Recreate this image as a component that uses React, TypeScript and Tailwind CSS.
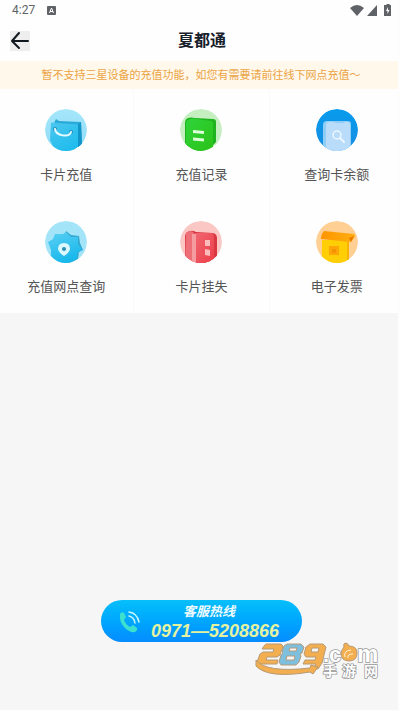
import type { ReactNode } from "react";

function BagIcon() {
  return (
    <svg viewBox="0 0 42 42" className="size-[42px]" aria-hidden="true">
      <defs>
        <clipPath id="bagClip"><circle cx="21" cy="21" r="21" /></clipPath>
        <linearGradient id="bagBg" x1="0" y1="0" x2="0" y2="1"><stop stopColor="#a5e6fa" /><stop offset="1" stopColor="#8fdcf7" /></linearGradient>
        <linearGradient id="bagFront" x1="0" y1="0" x2="0.6" y2="1"><stop stopColor="#4cc6ee" /><stop offset="1" stopColor="#20bdee" /></linearGradient>
      </defs>
      <g clipPath="url(#bagClip)">
        <circle cx="21" cy="21" r="21" fill="url(#bagBg)" />
        <path d="M9 14 11 10l3 2 22 1 1 24-9 2z" fill="#2ba9d8" />
        <path d="M6 13.5 33 15.500v20L31 42H10L5 31z" fill="url(#bagFront)" />
        <path d="m33 15.500 3-2.500 1 23-4 3z" fill="#1295c8" />
        <circle cx="10" cy="20" r="2" fill="#208fbd" />
        <circle cx="26" cy="23" r="2" fill="#208fbd" />
        <path d="M10 20c1 7 14 9 16 3" fill="none" stroke="#e6fbff" strokeWidth="2" strokeLinecap="round" />
      </g>
    </svg>
  );
}

function RecordIcon() {
  return (
    <svg viewBox="0 0 42 42" className="size-[42px]" aria-hidden="true">
      <defs>
        <clipPath id="recClip"><circle cx="21" cy="21" r="21" /></clipPath>
        <linearGradient id="recFront" x1="0" y1="0" x2="1" y2="1"><stop stopColor="#2fd43a" /><stop offset="1" stopColor="#2bc219" /></linearGradient>
      </defs>
      <g clipPath="url(#recClip)">
        <circle cx="21" cy="21" r="21" fill="#c5efc0" />
        <path d="M8 9q3-1 7 0l18 1q3 0 3 3v20q-7 9-17 9-8-1-14-8V14q0-4 3-5z" fill="#1fb41f" />
        <path d="M10 10q4-1 7 0l14 2q2 0 2 3v23q-7 4-14 4-7-1-13-6V14q0-3 4-4z" fill="url(#recFront)" />
        <path d="m13 21 11 1v3l-11-1zM13 28.500l11 1v3l-11-1z" fill="#dcffd9" />
      </g>
    </svg>
  );
}

function BalanceIcon() {
  return (
    <svg viewBox="0 0 42 42" className="size-[42px]" aria-hidden="true">
      <defs>
        <clipPath id="balClip"><circle cx="21" cy="21" r="21" /></clipPath>
        <linearGradient id="balBg" x1="0" y1="0" x2="0" y2="1"><stop stopColor="#079bed" /><stop offset="1" stopColor="#178de1" /></linearGradient>
      </defs>
      <g clipPath="url(#balClip)">
        <circle cx="21" cy="21" r="21" fill="url(#balBg)" />
        <path d="M7 16q0-4 4-4h21q3 0 3 3v27H7z" fill="#8ecdf6" />
        <path d="M10 16q0-3 3-3h5l2 1h7l2-1h2q3 0 3 3v26H10z" fill="#b8dcfa" />
        <circle cx="21" cy="26" r="4" fill="none" stroke="#edf8ff" strokeWidth="1.500" />
        <path d="m24 29 4 4" stroke="#edf8ff" strokeWidth="2" strokeLinecap="round" />
      </g>
    </svg>
  );
}

function BranchIcon() {
  return (
    <svg viewBox="0 0 42 42" className="size-[42px]" aria-hidden="true">
      <defs>
        <clipPath id="braClip"><circle cx="21" cy="21" r="21" /></clipPath>
        <linearGradient id="braFront" x1="0" y1="0" x2="0.400" y2="1"><stop stopColor="#5cd0f3" /><stop offset="1" stopColor="#18b8ec" /></linearGradient>
      </defs>
      <g clipPath="url(#braClip)">
        <circle cx="21" cy="21" r="21" fill="#a3e4f8" />
        <path d="m21 10 5 4 8 1 1 7 3 7-4 2-1 7-8 4-12-3z" fill="#35a9d0" />
        <path d="m10 13 8 0 3-2 5 5 7 0 0 7 4 6-5 3v6l-9 4-10 0-7-7 0-6-3-8 5-3z" fill="url(#braFront)" />
        <path d="M19 22q6 0 6 6-1 4-6 7-5-3-6-7 0-6 6-6z" fill="#dcf8ff" />
        <circle cx="19" cy="28" r="2" fill="#298eb2" />
      </g>
    </svg>
  );
}

function LossIcon() {
  return (
    <svg viewBox="0 0 42 42" className="size-[42px]" aria-hidden="true">
      <defs>
        <clipPath id="losClip"><circle cx="21" cy="21" r="21" /></clipPath>
        <linearGradient id="losFront" x1="0" y1="0" x2="1" y2="1"><stop stopColor="#f06671" /><stop offset="1" stopColor="#ec3f49" /></linearGradient>
      </defs>
      <g clipPath="url(#losClip)">
        <circle cx="21" cy="21" r="21" fill="#fbc7c5" />
        <path d="M6 12q5-4 10-1l17 1q4 1 4 5v25H5V15z" fill="#d93742" />
        <path d="M6 12q5-4 8 0v30H5z" fill="#ee6f77" />
        <path d="M15 12h17q2 1 2 5v25H15z" fill="url(#losFront)" />
        <path d="M12 13h4v29h-4z" fill="#f59ca0" />
        <path d="M25 19h5v6h-5zM25 28l5 1v6l-5-1z" fill="#fbbcbb" />
      </g>
    </svg>
  );
}

function InvoiceIcon() {
  return (
    <svg viewBox="0 0 42 42" className="size-[42px]" aria-hidden="true">
      <defs>
        <clipPath id="invClip"><circle cx="21" cy="21" r="21" /></clipPath>
        <linearGradient id="invTop" x1="0" y1="0" x2="1" y2="0"><stop stopColor="#ff9500" /><stop offset="1" stopColor="#ffae10" /></linearGradient>
      </defs>
      <g clipPath="url(#invClip)">
        <circle cx="21" cy="21" r="21" fill="#ffcf93" />
        <path d="M6 19h27v23H6z" fill="#ffce05" />
        <path d="m31 20 2-1v20l-2 2z" fill="#f9b400" />
        <path d="m8 10 30 3q2 1 0 4l-3 4-30-3q0-5 3-8z" fill="url(#invTop)" />
        <path d="m33 17 5-2-3 6z" fill="#e97900" />
        <path d="M13 25h10v9H13z" fill="#ffa606" />
        <path d="M16 28h4v4h-4z" fill="#f49300" />
      </g>
    </svg>
  );
}

const services: { label: string; icon: ReactNode }[] = [
  { label: "卡片充值", icon: <BagIcon /> },
  { label: "充值记录", icon: <RecordIcon /> },
  { label: "查询卡余额", icon: <BalanceIcon /> },
  { label: "充值网点查询", icon: <BranchIcon /> },
  { label: "卡片挂失", icon: <LossIcon /> },
  { label: "电子发票", icon: <InvoiceIcon /> },
];

function StatusBar() {
  return (
    <div className="flex h-5 items-center justify-between pl-3 pr-1 font-[Roboto,sans-serif] text-[#5f6266]">
      <div className="flex items-center gap-3">
        <span className="text-[12px] leading-5">4:27</span>
        <svg viewBox="0 0 9 9" className="size-[9px]" aria-hidden="true">
          <rect width="9" height="9" rx="1" fill="#5f6266" />
          <path d="m2.500 7 2-5 2 5M3 5.500h3" fill="none" stroke="#fff" />
        </svg>
      </div>
      <div className="flex items-center gap-[3px]">
        <svg viewBox="0 0 14 11" className="h-[11px] w-[14px]" aria-hidden="true">
          <path d="M0 3q7-6 14 0L7 11z" fill="currentColor" />
        </svg>
        <svg viewBox="0 0 10 11" className="h-[11px] w-[10px]" aria-hidden="true">
          <path d="M10 0v11H0z" fill="currentColor" />
        </svg>
        <svg viewBox="0 0 14 12" className="h-3 w-[14px]" aria-hidden="true">
          <path d="M5 1h1.500V0h3v1H11v11H4V1z" fill="currentColor" />
          <path d="M8 3 6 7h1.500v3l2-4H8z" fill="#fff" />
        </svg>
      </div>
    </div>
  );
}

function SiteMark() {
  return (
    <svg viewBox="0 -8 130 48" className="h-12 w-[130px]" role="img" aria-label="289.com 手游网">
      <g stroke="#b79a76" strokeLinejoin="round">
        <path d="m10 3 2-2h15l2 2-3 9-3 2H13l-1 3h12l-1 4H4l-1-2 3-8 3-2h10l1-3H8z" fill="#f3ae50" />
        <path fillRule="evenodd" d="M33 1h14l3 3-2 6-2 1 1 2-2 6-3 3H27l-2-3 2-7 2-2-1-2 2-5zm3 4-1 3h7l1-3zm-3 8-1 4h8l1-4z" fill="#7dbfdd" />
        <path fillRule="evenodd" d="M56 1h13l3 3-4 16-4 6-4-1 2-4H49l2-4h10l1-3H52l-2-3 2-7zm2 4-1 4h7l1-4z" fill="#f3ae50" />
        <path d="M2 17q10 13 54 8l1-3 7 2-5 7-3-2q-42 7-54-6z" fill="#f3ae50" />
      </g>
      <g fill="#fff" stroke="#999" strokeWidth="1.500" paintOrder="stroke" fontWeight="bold" fontFamily="'Liberation Sans', 'Noto Sans CJK SC', sans-serif">
        <text x="69" y="19" fontSize="22">.c</text>
        <text x="103" y="19" fontSize="24">m</text>
        <text x="69" y="33" fontSize="14">手</text>
        <text x="88" y="33" fontSize="14">游</text>
        <text x="110" y="33" fontSize="14">网</text>
      </g>
      <path d="M90 4q-1-3 1-4 3 0 4 3 8 0 8 7 0 8-8 8t-8-8q1-4 3-6z" fill="#f3ae50" stroke="#b79a76" />
      <path d="M91 14q-2-6 6-7M94 15q-1-4 5-4" fill="none" stroke="#fff4dc" />
    </svg>
  );
}

export default function App() {
  return (
    <div className="relative flex min-h-screen flex-col overflow-hidden border-b border-r-2 border-[#fdfdfd] bg-[#f6f6f6] font-['Liberation_Sans','Noto_Sans_CJK_SC',sans-serif]">
      <header className="bg-[#fefefe]">
        <StatusBar />
        <div className="grid h-[41px] grid-cols-[1fr_auto_1fr] items-center pl-[10px] pr-3">
          <button type="button" aria-label="返回" className="flex size-5 items-center justify-center bg-[#eeeeee]">
            <svg viewBox="0 0 20 20" className="size-5" fill="none" stroke="#111820" strokeWidth="2" strokeLinecap="round" strokeLinejoin="round" aria-hidden="true">
              <path d="M9 2 2 10l7 7M2 10h16" />
            </svg>
          </button>
          <h1 className="pl-2 text-[16px] font-bold leading-6 text-[#17202b]">夏都通</h1>
        </div>
      </header>

      <p className="h-7 whitespace-nowrap bg-[#fff8eb] pl-1 text-center text-[11px] leading-7 text-[#eba344]">
        暂不支持三星设备的充值功能，如您有需要请前往线下网点充值～
      </p>

      <nav className="-ml-px -mr-[7px] grid grid-cols-3 bg-[#fefefe]">
        {services.map((s) => (
          <button key={s.label} type="button" className="flex h-[112px] flex-col items-center gap-[14px] border-r border-[#fafafa] pt-5">
            {s.icon}
            <span className="text-[13px] leading-5 text-[#555555]">{s.label}</span>
          </button>
        ))}
      </nav>

      <div className="mt-auto flex justify-center pb-[68px] pl-[5px]">
        <a href="tel:0971-5208866" className="flex h-[42px] w-[201px] items-center rounded-full bg-linear-to-b from-[#08bffb] to-[#078cff] pl-4">
          <svg viewBox="0 0 24 24" className="size-6 shrink-0" fill="none" aria-hidden="true">
            <path d="M3 5q2-3 4-1l2 4-2 3q2 5 6 7l3-2 4 3q1 2-2 4-5 1-10-4Q2 13 3 5z" fill="#3ddfcf" />
            <path d="M12 7q5 1 6 7M12 3q8 1 10 10" stroke="#c5f7ff" strokeWidth="1.500" strokeLinecap="round" />
          </svg>
          <span className="flex flex-1 flex-col whitespace-nowrap pl-[10px] font-bold italic">
            <span className="pl-8 text-[13px] leading-[20px] text-[#eefaff]">客服热线</span>
            <span className="text-[18px] leading-[18px] text-[#e5f3a0]">0971—5208866</span>
          </span>
        </a>
      </div>

      <div className="pointer-events-none absolute bottom-[27px] right-[14px]">
        <SiteMark />
      </div>
    </div>
  );
}
